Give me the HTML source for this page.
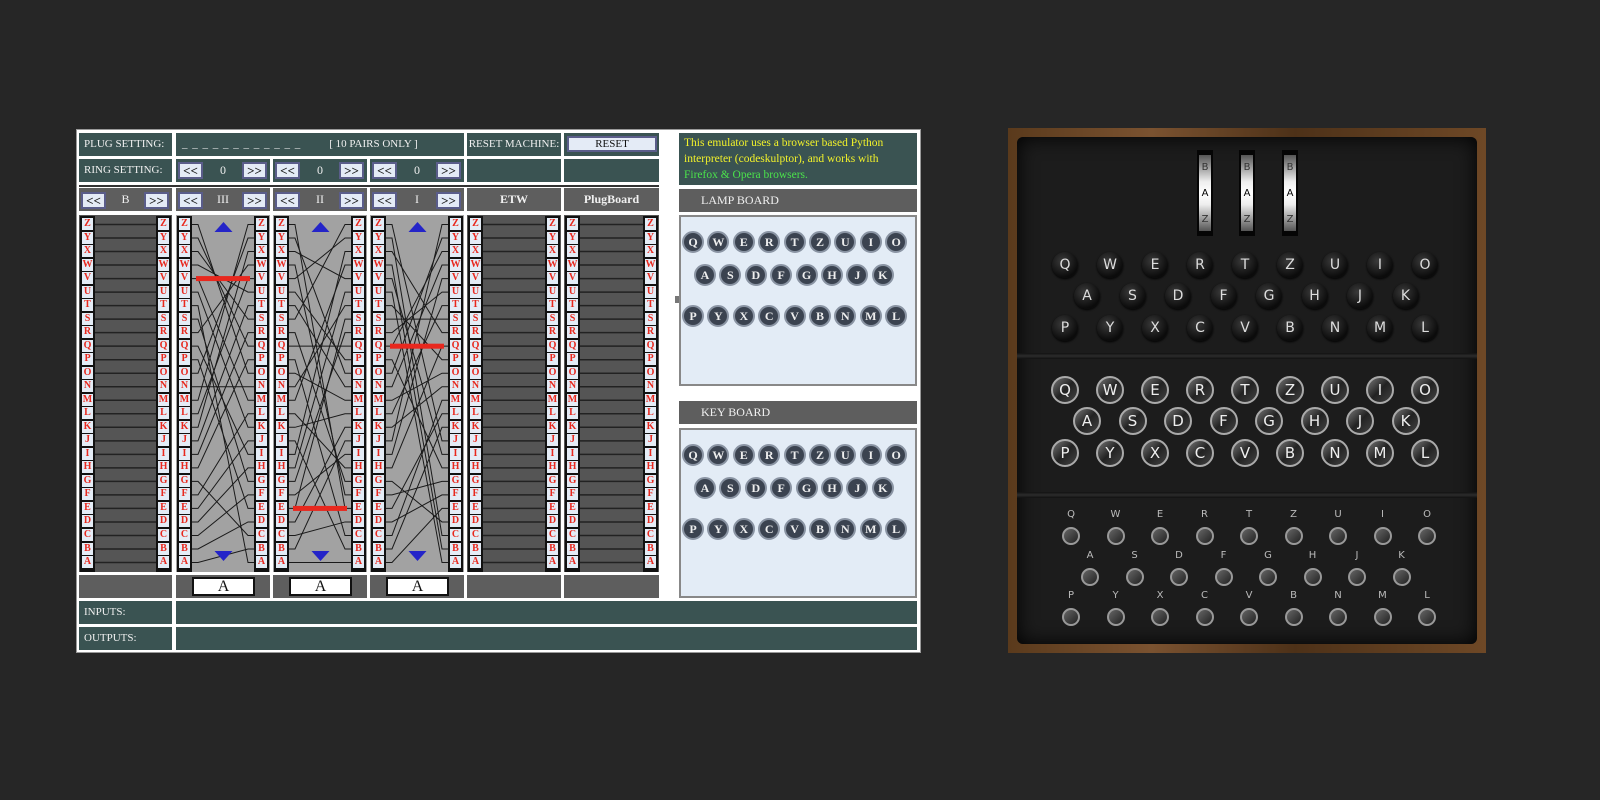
<!DOCTYPE html>
<html><head><meta charset="utf-8">
<style>
*{margin:0;padding:0;box-sizing:border-box}
body{width:1600px;height:800px;background:#262626;position:relative;overflow:hidden;font-family:"Liberation Serif",serif}
.a{position:absolute}
.teal{background:#3a5352;color:#f0f0f0;font-size:11px}
.gray{background:#5e5e5e;color:#f0f0f0;font-size:12px}
.btn{position:absolute;background:#e4ebf6;border:2px solid #5a5d8a;color:#111;font-size:13px;text-align:center;line-height:13px;font-weight:bold}
.strip{position:absolute;background:#111;width:15px}
.lb{position:absolute;left:2px;width:11px;height:12px;background:#e4ecf6;color:#e8281e;font-size:10px;line-height:12px;text-align:center;font-weight:bold}
.lamp{position:absolute;width:22px;height:22px;border-radius:50%;background:#3b4350;border:2px solid #8a94a3;color:#eee;font-size:12px;line-height:18px;text-align:center;font-weight:bold}
.ek{position:absolute;border-radius:50%;color:#ddd;font-family:"DejaVu Sans",sans-serif;text-align:center}
</style></head><body>
<div class="a" style="left:76px;top:129px;width:845px;height:524px;background:#fff;border:1px solid #999"></div>
<div class="a teal" style="left:79px;top:133px;width:93px;height:23px;line-height:23px;padding-left:5px">PLUG SETTING:</div>
<div class="a teal" style="left:176px;top:133px;width:288px;height:23px;line-height:22px;padding-left:6px;letter-spacing:1px">_ _ _ _ _ _ _ _ _ _ _ _<span style="margin-left:28px;letter-spacing:0">[ 10 PAIRS ONLY ]</span></div>
<div class="a teal" style="left:467px;top:133px;width:94px;height:23px;line-height:23px;text-align:center">RESET MACHINE:</div>
<div class="a teal" style="left:564px;top:133px;width:95px;height:23px"></div>
<div class="btn" style="left:567px;top:136px;width:90px;height:16px;font-weight:normal;font-size:11px;line-height:12px">RESET</div>
<div class="a teal" style="left:79px;top:159px;width:93px;height:23px;line-height:23px;padding-left:5px">RING SETTING:</div>
<div class="a teal" style="left:467px;top:159px;width:94px;height:23px"></div>
<div class="a teal" style="left:564px;top:159px;width:95px;height:23px"></div>
<div class="a" style="left:79px;top:185px;width:580px;height:2px;background:#333"></div>
<div id="cols"></div>
<div class="a teal" style="left:79px;top:601px;width:93px;height:23px;line-height:23px;padding-left:5px">INPUTS:</div>
<div class="a teal" style="left:176px;top:601px;width:741px;height:23px"></div>
<div class="a teal" style="left:79px;top:627px;width:93px;height:23px;line-height:23px;padding-left:5px">OUTPUTS:</div>
<div class="a teal" style="left:176px;top:627px;width:741px;height:23px"></div>
<div class="a teal" style="left:679px;top:133px;width:238px;height:52px;padding:2px 5px;line-height:16px;font-size:11.5px;color:#f2f22a">This emulator uses a browser based Python interpreter (codeskulptor), and works with <span style="color:#4be34b">Firefox &amp; Opera browsers.</span></div>
<div class="a gray" style="left:679px;top:189px;width:238px;height:23px;line-height:23px;padding-left:22px">LAMP BOARD</div>
<div class="a" style="left:679px;top:215px;width:238px;height:171px;background:#e3ecf6;border:2px solid #888"></div>
<div class="a gray" style="left:679px;top:401px;width:238px;height:23px;line-height:23px;padding-left:22px">KEY BOARD</div>
<div class="a" style="left:679px;top:428px;width:238px;height:170px;background:#e3ecf6;border:2px solid #888"></div>
<div class="a" style="left:675px;top:296px;width:4px;height:7px;background:#777"></div>
<div id="lamps"></div>
<div class="a" style="left:1008px;top:128px;width:478px;height:525px;background:linear-gradient(90deg,#5a3a1c,#7a5230 30%,#4d3118 60%,#6e4826);"></div>
<div class="a" style="left:1017px;top:137px;width:460px;height:507px;border-radius:6px;background:#1c1c1c;box-shadow:inset 0 0 20px #000"></div>
<div class="a" style="left:1017px;top:353px;width:460px;height:6px;background:linear-gradient(#111,#2c2c2c,#111)"></div>
<div class="a" style="left:1017px;top:492px;width:460px;height:6px;background:linear-gradient(#111,#2c2c2c,#111)"></div>
<div id="eng"></div>
<script>
var L="ZYXWVUTSRQPONMLKJIHGFEDCBA";
var alpha="ABCDEFGHIJKLMNOPQRSTUVWXYZ";
var h="";
var cols=[{x:79,w:93,name:"B",t:0},{x:176,w:94,name:"III",t:1},{x:273,w:94,name:"II",t:1},{x:370,w:94,name:"I",t:1},{x:467,w:94,name:"ETW",t:2},{x:564,w:95,name:"PlugBoard",t:2}];
var wir={"III":"BDFHJLCPRTXVZNYEIWGAKMUSQO","II":"AJDKSIRUXBLHWTMCQGZNPYFVOE","I":"EKMFLGDQVZNTOWYHXUSPAIBRCJ"};
var red={"III":"V","II":"E","I":"Q"};
var y0=218,st=13.52;
cols.forEach(function(c){
 var b='<div class="a gray" style="left:'+c.x+'px;top:188px;width:'+c.w+'px;height:23px;line-height:23px;text-align:center;'+(c.t==2?'font-weight:bold;font-size:12px':'')+'">'+c.name+'</div>';
 if(c.t<2){b+='<div class="btn" style="left:'+(c.x+2)+'px;top:192px;width:25px;height:17px">&lt;&lt;</div><div class="btn" style="left:'+(c.x+c.w-28)+'px;top:192px;width:25px;height:17px">&gt;&gt;</div>';}
 if(c.t==1){b+='<div class="a teal" style="left:'+c.x+'px;top:159px;width:'+c.w+'px;height:23px;line-height:23px;text-align:center;font-size:12px">0</div><div class="btn" style="left:'+(c.x+2)+'px;top:162px;width:25px;height:17px">&lt;&lt;</div><div class="btn" style="left:'+(c.x+c.w-28)+'px;top:162px;width:25px;height:17px">&gt;&gt;</div>';}
 b+='<div class="a" style="left:'+c.x+'px;top:215px;width:'+c.w+'px;height:357px;background:'+(c.t==1?'#a2a2a2':'#555')+'"></div>';
 var lx=c.x+1,rx=c.x+c.w-16;
 var svg='<svg class="a" style="left:'+c.x+'px;top:215px" width="'+c.w+'" height="357">';
 for(var i=0;i<26;i++){
  var yy=y0-215+i*st+6.5;
  if(c.t!=1){svg+='<line x1="16" y1="'+yy+'" x2="'+(c.w-16)+'" y2="'+yy+'" stroke="#222" stroke-width="1.5"/>';}
 }
 if(c.t==1){
  var w=wir[c.name];
  for(var k=0;k<26;k++){
   var ya=y0-215+L.indexOf(alpha[k])*st+6.5, yb=y0-215+L.indexOf(w[k])*st+6.5;
   svg+='<polyline points="16,'+ya+' 22,'+ya+' '+(c.w-22)+','+yb+' '+(c.w-16)+','+yb+'" fill="none" stroke="#1a1a1a" stroke-width="1"/>';
  }
  var ry=y0-215+L.indexOf(red[c.name])*st+6.5;
  svg+='<rect x="20" y="'+(ry-2.5)+'" width="'+(c.w-40)+'" height="5" fill="#e8281e"/>';
  var cx=c.w/2+0.5;
  svg+='<polygon points="'+(cx-9)+',17 '+(cx+9)+',17 '+cx+',7" fill="#2424c8"/>';
  svg+='<polygon points="'+(cx-9)+',336 '+(cx+9)+',336 '+cx+',346" fill="#2424c8"/>';
 }
 svg+='</svg>';
 b+=svg;
 [lx,rx].forEach(function(sx){
  b+='<div class="strip" style="left:'+sx+'px;top:216px;height:356px">';
  for(var i=0;i<26;i++){b+='<div class="lb" style="top:'+(2+i*st).toFixed(1)+'px">'+L[i]+'</div>';}
  b+='</div>';
 });
 b+='<div class="a gray" style="left:'+c.x+'px;top:575px;width:'+c.w+'px;height:23px"></div>';
 if(c.t==1){b+='<div class="a" style="left:'+(c.x+16)+'px;top:577px;width:63px;height:19px;background:#fff;border:2px solid #111;text-align:center;line-height:15px;font-size:16px;color:#111">A</div>';}
 h+=b;
});
document.getElementById("cols").innerHTML=h;
var r1="QWERTZUIO",r2="ASDFGHJK",r3="PYXCVBNML";
var s="";
function row(str,x0,y,dx,fn){for(var i=0;i<str.length;i++)s+=fn(x0+i*dx,y,str[i]);}
function lamp(x,y,ch){return '<div class="lamp" style="left:'+(x-11)+'px;top:'+(y-11)+'px">'+ch+'</div>';}
[[242,275,316],[455,488,529]].forEach(function(ys){
 row(r1,693,ys[0],25.4,lamp);row(r2,705,ys[1],25.4,lamp);row(r3,693,ys[2],25.4,lamp);
});
document.getElementById("lamps").innerHTML=s;
s="";
[1205,1247,1290].forEach(function(x){
 s+='<div class="a" style="left:'+(x-8)+'px;top:150px;width:16px;height:86px;background:#050505"></div>';
 s+='<div class="a" style="left:'+(x-6)+'px;top:155px;width:12px;height:76px;background:linear-gradient(#555,#eee 35%,#fff 50%,#eee 65%,#555);font-family:DejaVu Sans,sans-serif;font-size:10px;color:#333;text-align:center;line-height:26px">B<br><span style="color:#000">A</span><br>Z</div>';
});
function elamp(x,y,ch){return '<div class="ek" style="left:'+(x-13)+'px;top:'+(y-13)+'px;width:26px;height:26px;background:radial-gradient(circle at 40% 35%,#3a3a3a,#0b0b0b 70%);box-shadow:0 1px 2px #000;font-size:14px;line-height:26px">'+ch+'</div>';}
function ekey(x,y,ch){return '<div class="ek" style="left:'+(x-14)+'px;top:'+(y-14)+'px;width:28px;height:28px;border:2px solid #aaa;background:linear-gradient(135deg,#777,#222 50%,#444);font-size:15px;line-height:24px;color:#eee">'+ch+'</div>';}
function eplug(x,y,ch){return '<div class="ek" style="left:'+(x-10)+'px;top:'+(y-27)+'px;width:20px;font-size:10px;color:#bbb">'+ch+'</div><div class="ek" style="left:'+(x-9)+'px;top:'+(y-9)+'px;width:18px;height:18px;border:2px solid #999;background:linear-gradient(135deg,#666,#222)"></div>';}
row(r1,1065,265,45,elamp);row(r2,1087,296,45.5,elamp);row(r3,1065,328,45,elamp);
row(r1,1065,390,45,ekey);row(r2,1087,421,45.5,ekey);row(r3,1065,453,45,ekey);
row(r1,1071,536,44.5,eplug);row(r2,1090,577,44.5,eplug);row(r3,1071,617,44.5,eplug);
document.getElementById("eng").innerHTML=s;
</script>
</body></html>
